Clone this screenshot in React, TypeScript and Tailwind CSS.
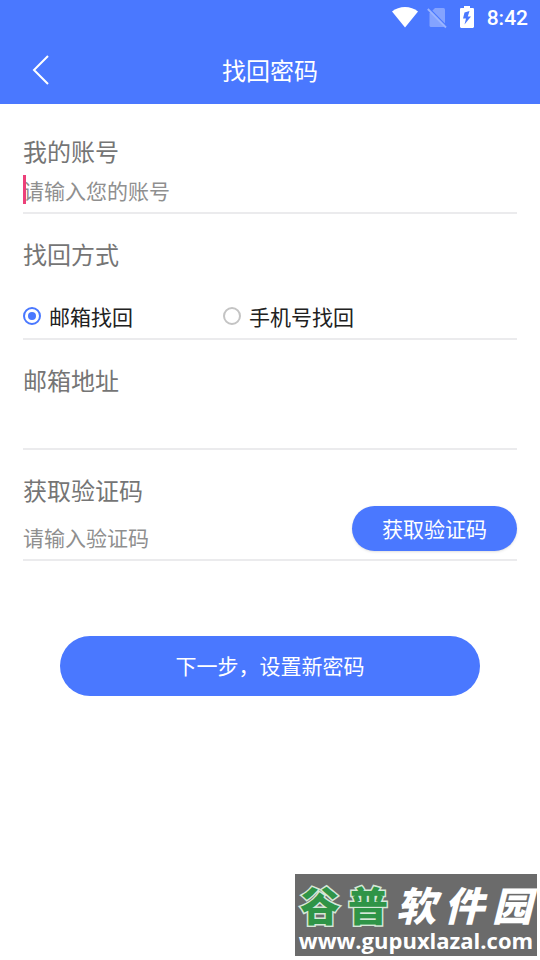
import { useState } from "react";
import type { ReactNode } from "react";

function StatusBar() {
  return (
    <div className="flex h-9 items-center justify-end px-3 text-white">
      {/* Wi-Fi */}
      <svg className="mr-2 h-6 w-7" viewBox="0 0 28 24" fill="currentColor" aria-hidden="true">
        <path d="M1 5.500C4.600 2.600 9.100 1 14 1s9.400 1.600 13 4.500L14 21.500z" />
      </svg>
      {/* No SIM */}
      <svg className="mr-3 h-6 w-5" viewBox="0 0 20 24" aria-hidden="true">
        <path d="M8 2h8.500a1.500 1.500 0 0 1 1.500 1.500V19.500a1.500 1.500 0 0 1-1.500 1.500H4a1.500 1.500 0 0 1-1.500-1.500V7.500z" fill="#fff" opacity=".32" />
        <path d="M1.800 2 20 20.500" stroke="#4a78ff" strokeWidth="1.500" />
        <path d="M.8 3 19 21.500" stroke="#9ab4ff" strokeWidth="1.800" />
      </svg>
      {/* Charging battery */}
      <svg className="mr-3 h-6 w-4" viewBox="0 0 16 24" aria-hidden="true">
        <path d="M5 0h6v2h3.200L15 2.800V21l-1 1H2l-1-1V2.800L1.800 2H5z" fill="#fff" />
        <path d="M10.500 5 5.500 6.500 4 12.500h3l-1.500 6L12 10.500H8.800z" fill="#4a78ff" />
      </svg>
      <span className="font-['Roboto',sans-serif] text-[21px] leading-6 font-medium">8:42</span>
    </div>
  );
}

const fieldClass = "border-b-2 border-[#ebebed] pt-6";
const labelClass = "block text-2xl leading-8 text-[#757575]";

function Field({ label, htmlFor, children }: { label: string; htmlFor: string; children: ReactNode }) {
  return (
    <div className={fieldClass}>
      <label htmlFor={htmlFor} className={labelClass}>
        {label}
      </label>
      {children}
    </div>
  );
}

function Radio({ label, checked, onChange }: { label: string; checked: boolean; onChange: () => void }) {
  return (
    <label className="flex w-[200px] items-center gap-2 text-[21px] leading-8 text-[#212121]">
      <input
        type="radio"
        name="method"
        checked={checked}
        onChange={onChange}
        className="grid size-[18px] appearance-none place-items-center rounded-full border-2 border-[#c4c4c4] bg-white before:size-2 before:rounded-full checked:border-[#4a78ff] checked:before:bg-[#4a78ff]"
      />
      {label}
    </label>
  );
}

function Watermark() {
  return (
    <div className="absolute right-[3px] bottom-1 flex h-[82px] w-[242px] flex-col items-center bg-[#6b6b6b] pt-3 whitespace-nowrap">
      <div className="flex gap-2 font-['Noto_Sans_CJK_SC',sans-serif] text-[40px] leading-9 font-black text-white">
        <span className="flex gap-2 text-[#2f9447] [-webkit-text-stroke:3px_#d5e8d8] [paint-order:stroke_fill]">
          <span>谷</span>
          <span>普</span>
        </span>
        <span className="flex gap-2 italic">
          <span>软</span>
          <span>件</span>
          <span>园</span>
        </span>
      </div>
      <div className="pt-1 font-['Open_Sans',sans-serif] text-[22px] leading-7 font-bold text-white">www.gupuxlazal.com</div>
    </div>
  );
}

export default function App() {
  const [method, setMethod] = useState("email");

  return (
    <div className="relative min-h-screen bg-white font-['Noto_Sans_CJK_SC',sans-serif]">
      <header className="bg-[#4a78ff] text-white">
        <StatusBar />
        <div className="grid h-[68px] grid-cols-[80px_1fr_80px] items-center">
          <button type="button" aria-label="返回" className="flex h-full items-center justify-center">
            <svg className="h-8 w-5" viewBox="0 0 20 32" fill="none" stroke="currentColor" strokeWidth="2" aria-hidden="true">
              <path d="M18 2 4 16l14 14" />
            </svg>
          </button>
          <h1 className="text-center text-2xl leading-8">找回密码</h1>
        </div>
      </header>

      <form className="px-[23px] pt-[7px]" onSubmit={(e) => e.preventDefault()}>
        <Field label="我的账号" htmlFor="account">
          <div className="relative">
            <input
              id="account"
              type="text"
              placeholder="请输入您的账号"
              className="block h-[45px] w-full text-[21px] text-[#212121] outline-none placeholder:text-[#8f8f8f]"
            />
            <span className="absolute top-2 left-0 h-[29px] w-[3px] bg-[#ec407a]" />
          </div>
        </Field>

        <div role="radiogroup" aria-labelledby="method-label" className={fieldClass}>
          <div id="method-label" className={labelClass}>
            找回方式
          </div>
          <div className="mt-6 flex h-11 items-center">
            <Radio label="邮箱找回" checked={method === "email"} onChange={() => setMethod("email")} />
            <Radio label="手机号找回" checked={method === "phone"} onChange={() => setMethod("phone")} />
          </div>
        </div>

        <Field label="邮箱地址" htmlFor="email">
          <input id="email" type="text" className="block h-[52px] w-full text-[21px] text-[#212121] outline-none" />
        </Field>

        <Field label="获取验证码" htmlFor="code">
          <div className="flex h-[53px]">
            <input
              id="code"
              type="text"
              placeholder="请输入验证码"
              className="h-11 min-w-0 flex-1 self-end text-[21px] text-[#212121] outline-none placeholder:text-[#8f8f8f]"
            />
            <button type="button" className="h-[45px] w-[165px] rounded-full bg-[#4a78ff] text-[21px] text-white shadow-sm">
              获取验证码
            </button>
          </div>
        </Field>

        <div className="px-[37px] pt-[75px]">
          <button type="submit" className="h-[60px] w-full rounded-full bg-[#4a78ff] text-[21px] text-white">
            下一步，设置新密码
          </button>
        </div>
      </form>

      <Watermark />
    </div>
  );
}
